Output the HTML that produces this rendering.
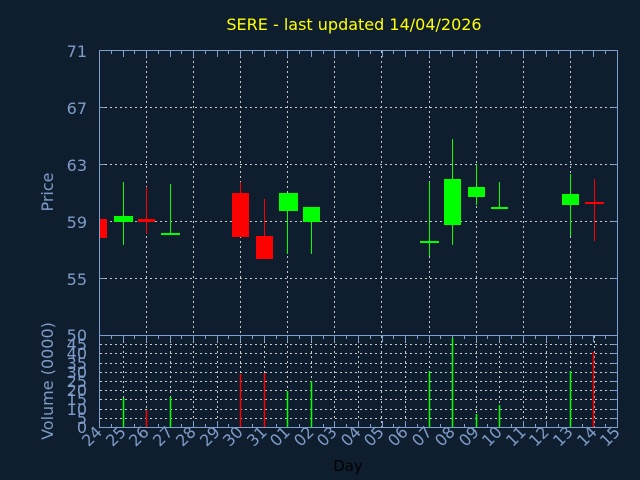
<!DOCTYPE html><html><head><style>body{margin:0;background:#0f1e2f}svg{display:block}text{font-family:"DejaVu Sans","Liberation Sans",sans-serif}</style></head><body>
<svg width="640" height="480" xmlns="http://www.w3.org/2000/svg">
<rect width="640" height="480" fill="#0f1e2f"/>
<text x="354" y="30" font-size="16" fill="#ffff00" text-anchor="middle">SERE - last updated 14/04/2026</text>
<g stroke="#c8c8c8" stroke-width="1" stroke-dasharray="2,3">
<path d="M146.5 51V335M193.5 51V335M240.5 51V335M287.5 51V335M334.5 51V335M381.5 51V335M429.5 51V335M476.5 51V335M523.5 51V335M570.5 51V335"/>
<path d="M100 107.5H617M100 164.5H617M100 221.5H617M100 278.5H617"/>
<path d="M123.5 336V427M146.5 336V427M170.5 336V427M193.5 336V427M217.5 336V427M240.5 336V427M264.5 336V427M287.5 336V427M311.5 336V427M334.5 336V427M358.5 336V427M381.5 336V427M405.5 336V427M429.5 336V427M452.5 336V427M476.5 336V427M499.5 336V427M523.5 336V427M546.5 336V427M570.5 336V427M594.5 336V427"/>
<path d="M100 344.5H617M100 353.5H617M100 363.5H617M100 372.5H617M100 381.5H617M100 390.5H617M100 399.5H617M100 409.5H617M100 418.5H617"/>
</g>
<g fill="none" stroke="#7f9fcf" stroke-width="1">
<rect x="99.5" y="50.5" width="518" height="377"/>
<path d="M99.5 335.5H617.5"/>
<path d="M99 107.5h6M99 164.5h6M99 221.5h6M99 278.5h6M617 107.5h-6M617 164.5h-6M617 221.5h-6M617 278.5h-6"/>
<path d="M611 344.5h6M611 353.5h6M611 363.5h6M611 372.5h6M611 381.5h6M611 390.5h6M611 399.5h6M611 409.5h6M611 418.5h6"/>
</g>
<g id="tk" stroke="#7f9fcf" stroke-width="1"></g>
<script>
(function(){var g=document.getElementById('tk'),d='';for(var i=0;i<=44;i++){var x=Math.round(99+i*11.7727)+0.5;var L=(i%2==0)?6:3;d+='M'+x+' 51v'+L+'M'+x+' 427v-'+L+'M'+x+' 336v'+L;}var p=document.createElementNS('http://www.w3.org/2000/svg','path');p.setAttribute('d',d);g.appendChild(p);})();
</script>
<g font-size="16" fill="#7f9cc8" text-anchor="end">
<text x="87" y="57">71</text><text x="87" y="114">67</text><text x="87" y="171">63</text><text x="87" y="228">59</text><text x="87" y="285">55</text><text x="87" y="341">50</text>
<text x="87" y="350">45</text><text x="87" y="359">40</text><text x="87" y="369">35</text><text x="87" y="378">30</text><text x="87" y="387">25</text><text x="87" y="396">20</text><text x="87" y="405">15</text><text x="87" y="415">10</text><text x="87" y="424">5</text><text x="87" y="433">0</text>
</g>
<text transform="translate(53,192) rotate(-90)" font-size="16" fill="#7f9cc8" text-anchor="middle">Price</text>
<text transform="translate(53,381) rotate(-90)" font-size="16" fill="#7f9cc8" text-anchor="middle">Volume (0000)</text>
<g font-size="16" fill="#7f9cc8" text-anchor="end">
<text transform="translate(103,433) rotate(-45)">24</text><text transform="translate(127,433) rotate(-45)">25</text><text transform="translate(150,433) rotate(-45)">26</text><text transform="translate(174,433) rotate(-45)">27</text><text transform="translate(197,433) rotate(-45)">28</text><text transform="translate(221,433) rotate(-45)">29</text><text transform="translate(244,433) rotate(-45)">30</text><text transform="translate(268,433) rotate(-45)">31</text><text transform="translate(291,433) rotate(-45)">01</text><text transform="translate(315,433) rotate(-45)">02</text><text transform="translate(338,433) rotate(-45)">03</text><text transform="translate(362,433) rotate(-45)">04</text><text transform="translate(385,433) rotate(-45)">05</text><text transform="translate(409,433) rotate(-45)">06</text><text transform="translate(433,433) rotate(-45)">07</text><text transform="translate(456,433) rotate(-45)">08</text><text transform="translate(480,433) rotate(-45)">09</text><text transform="translate(503,433) rotate(-45)">10</text><text transform="translate(527,433) rotate(-45)">11</text><text transform="translate(550,433) rotate(-45)">12</text><text transform="translate(574,433) rotate(-45)">13</text><text transform="translate(598,433) rotate(-45)">14</text><text transform="translate(621,433) rotate(-45)">15</text>
</g>
<g fill="#ff0000" stroke="#ff0000" stroke-width="1">
<rect x="100" y="219" width="7" height="19" stroke="none"/>
<path d="M146.5 187V234M264.5 199V236M240.5 182V193M594.5 179V241" />
<rect x="138" y="219" width="17" height="3" stroke="none"/>
<rect x="232" y="193" width="17" height="44" stroke="none"/>
<rect x="256" y="236" width="17" height="23" stroke="none"/>
<rect x="585" y="202" width="19" height="2" stroke="none"/>
<path d="M146.5 410V427M240.5 374V427M264.5 373V427M593.5 352V427" stroke-width="1.5"/>
</g>
<g fill="#00ff00" stroke="#00ff00" stroke-width="1">
<path d="M123.5 182V245M170.5 184V235M287.5 211V254M311.5 222V254M429.5 182V256M452.5 139V245M476.5 165V205M499.5 182V209M570.5 174V236"/>
<rect x="114" y="216" width="19" height="6" stroke="none"/>
<rect x="161" y="233" width="19" height="2" stroke="none"/>
<rect x="279" y="193" width="19" height="18" stroke="none"/>
<rect x="303" y="207" width="17" height="15" stroke="none"/>
<rect x="420" y="241" width="19" height="2" stroke="none"/>
<rect x="444" y="179" width="17" height="46" stroke="none"/>
<rect x="468" y="187" width="17" height="10" stroke="none"/>
<rect x="491" y="207" width="17" height="2" stroke="none"/>
<rect x="562" y="194" width="17" height="11" stroke="none"/>
<path d="M123.5 398V427M170.5 397V427M287.5 391V427M311.5 381V427M429.5 371V427M452.5 338V427M476.5 414V427M499.5 405V427M570.5 371V427" stroke-width="1.5"/>
</g>
<text x="348" y="471" font-size="15" fill="#000" text-anchor="middle">Day</text>
</svg>
</body></html>
